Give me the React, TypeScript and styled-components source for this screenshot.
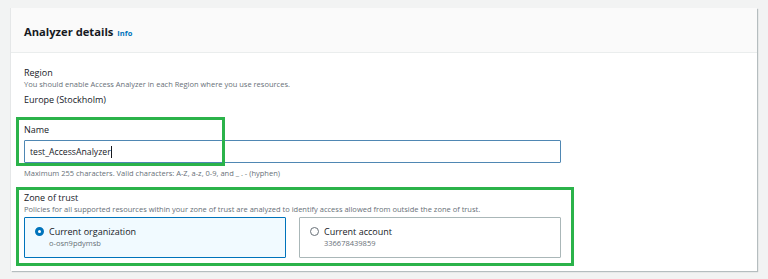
import { createGlobalStyle } from 'styled-components';
import styled from 'styled-components';

const Global = createGlobalStyle`
  html, body {
    margin: 0;
    background: #f2f3f3;
  }
  body {
    font-family: 'Open Sans', 'Noto Sans', sans-serif;
    color: #16191f;
  }
`;

const Page = styled.main`
  padding: 8px 11px 0;
  height: 279px;
  box-sizing: border-box;
`;

const Card = styled.section`
  background: #fff;
  box-shadow: 1px 1px 1px rgba(0, 28, 36, 0.25), -1px 0 0 rgba(0, 28, 36, 0.05);
  height: 263px;
`;

const Header = styled.header`
  display: flex;
  align-items: baseline;
  gap: 4px;
  height: 45px;
  box-sizing: border-box;
  padding: 16px 13px 0;
  background: #fafafa;
  border-bottom: 1px solid #eaeded;
`;

const Title = styled.h2`
  margin: 0;
  font-size: 11.2px;
  font-weight: 700;
`;

const InfoLink = styled.a`
  font-size: 7.5px;
  font-weight: 700;
  color: #0073bb;
`;

const Body = styled.div`
  padding: 13px 13px 0;
  display: flex;
  flex-direction: column;
`;

const Field = styled.div<{ $gap?: number }>`
  position: relative;
  margin-bottom: ${({ $gap }) => $gap ?? 0}px;
`;

const Label = styled.div`
  font-size: 9px;
  line-height: 13px;
`;

const Description = styled.div`
  font-size: 7.5px;
  line-height: 11px;
  color: #687078;
`;

const Value = styled.div`
  font-size: 9px;
  line-height: 13px;
  margin-top: 3px;
`;

const Input = styled.div`
  display: flex;
  align-items: center;
  width: 537px;
  height: 23px;
  box-sizing: border-box;
  margin-top: 4px;
  padding: 0 5px;
  border: 1px solid #4f87b3;
  border-radius: 1px;
  font-size: 8.7px;
`;

const Caret = styled.span`
  display: inline-block;
  width: 1px;
  height: 12px;
  background: #16191f;
`;

const Hint = styled(Description)`
  margin-top: 5px;
`;

const Tiles = styled.div`
  display: grid;
  grid-template-columns: 262px 262px;
  gap: 13px;
  margin-top: 2px;
`;

const Tile = styled.label<{ $checked?: boolean }>`
  display: grid;
  grid-template-columns: 14px 1fr;
  align-items: center;
  align-content: start;
  height: 41px;
  box-sizing: border-box;
  padding: 7px 10px 0;
  border: 1px solid ${({ $checked }) => ($checked ? '#0073bb' : '#aab7b8')};
  background: ${({ $checked }) => ($checked ? '#f1faff' : '#fff')};
  border-radius: 1px;
`;

const Radio = styled.span<{ $checked?: boolean }>`
  width: 9px;
  height: 9px;
  box-sizing: border-box;
  border-radius: 50%;
  border: ${({ $checked }) => ($checked ? '3px solid #0073bb' : '1px solid #687078')};
  background: #fff;
`;

const TileTitle = styled.span`
  font-size: 9px;
  line-height: 13px;
`;

const TileSub = styled.span`
  grid-column: 2;
  font-size: 7.5px;
  line-height: 11px;
  color: #687078;
`;

const Highlight = styled.div<{ $top: number; $left: number; $width: number; $height: number }>`
  position: absolute;
  top: ${({ $top }) => $top}px;
  left: ${({ $left }) => $left}px;
  width: ${({ $width }) => $width}px;
  height: ${({ $height }) => $height}px;
  box-sizing: border-box;
  border: 3px solid #2bb34a;
  pointer-events: none;
`;

export default function App() {
  return (
    <>
      <Global />
      <Page>
        <Card>
          <Header>
            <Title>Analyzer details</Title>
            <InfoLink>Info</InfoLink>
          </Header>
          <Body>
            <Field $gap={17}>
              <Label>Region</Label>
              <Description>You should enable Access Analyzer in each Region where you use resources.</Description>
              <Value>Europe (Stockholm)</Value>
            </Field>
            <Field $gap={12}>
              <Label>Name</Label>
              <Input>
                test_AccessAnalyzer
                <Caret />
              </Input>
              <Hint>Maximum 255 characters. Valid characters: A-Z, a-z, 0-9, and _ . - (hyphen)</Hint>
              <Highlight $top={-6} $left={-8} $width={209} $height={49} />
            </Field>
            <Field>
              <Label>Zone of trust</Label>
              <Description>
                Policies for all supported resources within your zone of trust are analyzed to identify access allowed
                from outside the zone of trust.
              </Description>
              <Tiles>
                <Tile $checked>
                  <Radio $checked />
                  <TileTitle>Current organization</TileTitle>
                  <TileSub>o-osn9pdymsb</TileSub>
                </Tile>
                <Tile>
                  <Radio />
                  <TileTitle>Current account</TileTitle>
                  <TileSub>336678439859</TileSub>
                </Tile>
              </Tiles>
              <Highlight $top={-4} $left={-8} $width={558} $height={79} />
            </Field>
          </Body>
        </Card>
      </Page>
    </>
  );
}
